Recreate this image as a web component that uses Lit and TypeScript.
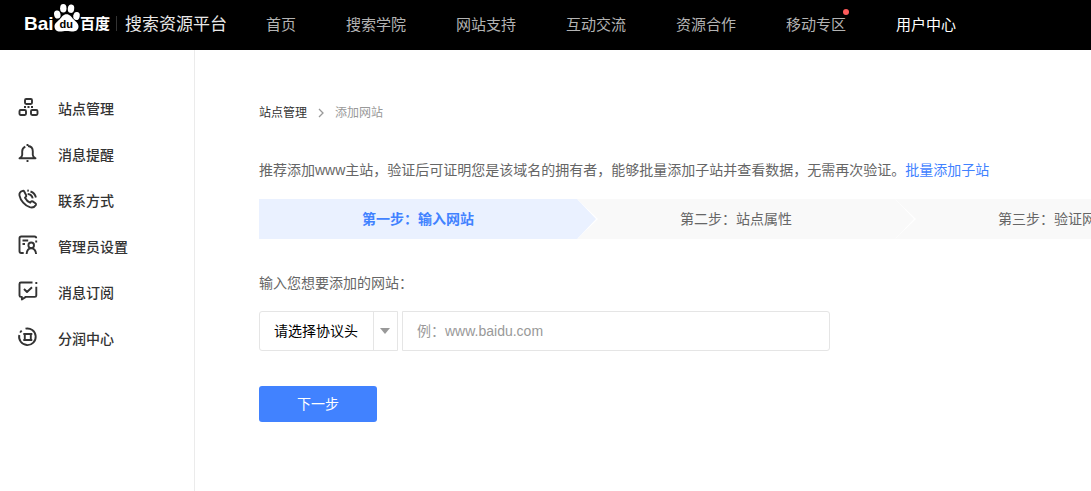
import { LitElement, html, css, svg, TemplateResult } from "lit";
import { customElement, state } from "lit/decorators.js";

interface NavItem {
  label: string;
  active?: boolean;
  dot?: boolean;
}

interface SideItem {
  label: string;
  icon: TemplateResult;
}

const NAV: NavItem[] = [
  { label: "首页" },
  { label: "搜索学院" },
  { label: "网站支持" },
  { label: "互动交流" },
  { label: "资源合作" },
  { label: "移动专区", dot: true },
  { label: "用户中心", active: true },
];

const SIDE: SideItem[] = [
  {
    label: "站点管理",
    icon: svg`
      <rect x="7" y="2" width="7" height="5" rx="1.2" />
      <rect x="1.500" y="13" width="6.500" height="5" rx="1.2" />
      <rect x="13" y="13" width="6.500" height="5" rx="1.2" />
      <path d="M6 10h2M9.500 10h2M13 10h2" />`,
  },
  {
    label: "消息提醒",
    icon: svg`
      <path d="M7.300 3.600C5 4.600 4.200 6.300 4.200 8.300v3.600c0 1.600-.8 2.400-2.700 3.400h16c-1.900-1-2.700-1.800-2.700-3.400V8.300c0-3-1.900-5-4.800-5.300M9.500 1v2M9.500 17v2" />`,
  },
  {
    label: "联系方式",
    icon: svg`
      <path d="M4.800 1.8C2.600 2.400 1 4 1.500 6.600c.9 4.800 5.500 10 10.300 11.600 2.600.8 4.800-.2 6.100-2.300.4-.8.2-1.200-.5-1.700l-2.700-1.800c-.7-.4-1.200-.3-1.700.3l-.8 1c-2.200-.9-4-2.700-5.200-5l.9-.9c.5-.5.5-1 .2-1.600L6.200 2.500c-.3-.6-.7-.9-1.400-.7z" />
      <path d="M9.300 1.500l1.500.3M12.500 2.500c3 1 4.800 3 5.400 6M9.700 5c2.700.3 4.400 1.800 5 4.400" />`,
  },
  {
    label: "管理员设置",
    icon: svg`
      <path d="M5.700 18H3.200c-1.200 0-1.700-.6-1.700-1.700V3.200C1.500 2.100 2.100 1.500 3.200 1.500h13.300c1 0 1.700.5 1.700 1.700M18.200 5.500v2M4.500 5.500h5.700M4.500 9h2.500" />
      <circle cx="13.200" cy="10.300" r="2.800" />
      <path d="M8.600 19c.3-3.600 2-5.800 4.600-5.800s4.500 2.200 4.900 5.800" />`,
  },
  {
    label: "消息订阅",
    icon: svg`
      <path d="M14.500 1.500H2.900c-1 0-1.400.5-1.400 1.500v11.500c0 .9.500 1.400 1.400 1.400h1v2.600l3.900-2.600h9c1 0 1.500-.5 1.500-1.400V5.800M18.300 1v2M6 8l3 3 5-4.800" />`,
  },
  {
    label: "分润中心",
    icon: svg`
      <path d="M7.500 1.700A8.300 8.300 0 1 1 1.300 8M2.200 5.600c.4-.7.9-1.300 1.500-1.900" />
      <path d="M6.800 7h6v6H6.800zM5.300 7h9M5.300 13h9" />`,
  },
];

const STEPS = ["第一步：输入网站", "第二步：站点属性", "第三步：验证网站"];

@customElement("site-header")
class SiteHeader extends LitElement {
  static styles = css`
    :host {
      display: block;
      background: #000;
    }
    .bar {
      display: flex;
      align-items: center;
      height: 50px;
      padding-left: 24px;
      white-space: nowrap;
    }
    .logo {
      display: flex;
      flex: none;
      width: 242px;
    }
    .nav {
      display: flex;
      gap: 50px;
    }
    .link {
      position: relative;
      color: #b3b3b3;
      font-size: 15px;
      line-height: 24px;
      text-decoration: none;
    }
    .active {
      color: #fff;
    }
    .dot {
      position: absolute;
      top: -4px;
      right: -3px;
      width: 6px;
      height: 6px;
      border-radius: 50%;
      background: #ff5b5b;
    }
    .brand {
      font-family: "Liberation Sans", sans-serif;
      font-weight: bold;
    }
    .cjk {
      font-family: "Noto Sans CJK SC", sans-serif;
    }
  `;

  render() {
    return html`
      <header class="bar">
        <a class="logo" href="#" aria-label="百度搜索资源平台">
          <svg width="210" height="50" viewBox="0 0 210 50" fill="#fff">
            <text class="brand" x="0" y="30" font-size="19">Bai</text>
            <ellipse cx="33.300" cy="14.500" rx="3.200" ry="4.100" transform="rotate(-12 33.300 14.500)" />
            <ellipse cx="39.300" cy="8.300" rx="3.200" ry="4.300" />
            <ellipse cx="47" cy="8.700" rx="3.200" ry="4.200" transform="rotate(8 47 8.700)" />
            <ellipse cx="52.500" cy="16" rx="3.200" ry="4" transform="rotate(12 52.500 16)" />
            <path d="M42.500 14.300c3.200 0 4.800 2.600 6.700 4.800 2.200 2.300 5.300 4 5.300 7.500 0 3-2.200 4.900-5.200 4.900-2.400 0-4.400-.6-6.800-.6s-4.200.6-6.600.6c-3.200 0-5.400-1.900-5.400-5 0-3.500 3.200-5 5.300-7.300 2.200-2.300 3.500-4.900 6.700-4.900z" />
            <text class="brand" x="35.500" y="28" font-size="11" fill="#000">du</text>
            <text class="cjk" x="56" y="29" font-size="15" font-weight="bold">百度</text>
            <path d="M92 16h1v15h-1z" fill="#333" />
            <text class="cjk" x="101" y="30" font-size="17" fill="#e8e8e8">搜索资源平台</text>
          </svg>
        </a>
        <nav class="nav">
          ${NAV.map(
            (n) => html`<a class="link ${n.active ? "active" : ""}" href="#"
              >${n.label}${n.dot ? html`<span class="dot"></span>` : ""}</a
            >`
          )}
        </nav>
      </header>
    `;
  }
}

@customElement("side-menu")
class SideMenu extends LitElement {
  static styles = css`
    :host {
      display: block;
      flex: none;
      box-sizing: border-box;
      width: 195px;
      padding-top: 36px;
      border-right: 1px solid #ebebeb;
    }
    .item {
      display: flex;
      align-items: center;
      gap: 20px;
      height: 46px;
      padding-left: 18px;
      color: #333;
      font-size: 14px;
      font-weight: 500;
      text-decoration: none;
    }
    .icon {
      flex: none;
      width: 20px;
      height: 24px;
      overflow: visible;
      fill: none;
      stroke: #333;
      stroke-width: 1.9;
      stroke-linecap: butt;
      stroke-linejoin: round;
    }
  `;

  render() {
    return html`
      <nav>
        ${SIDE.map(
          (s) => html`<a class="item" href="#">
            <svg class="icon" viewBox="0 0 20 24">${s.icon}</svg>
            <span>${s.label}</span>
          </a>`
        )}
      </nav>
    `;
  }
}

@customElement("step-bar")
class StepBar extends LitElement {
  static styles = css`
    :host {
      display: block;
    }
    .steps {
      display: flex;
      min-width: 954px;
      margin: 0;
      padding: 0;
      list-style: none;
    }
    .step {
      --tone: #f9f9f9;
      position: relative;
      flex: 1;
      background: var(--tone);
      color: #666;
      font-size: 14px;
      line-height: 40px;
      text-align: center;
    }
    .current {
      --tone: #eaf1ff;
      color: #4182ff;
      font-weight: bold;
    }
    .step:not(:last-child)::before,
    .step:not(:last-child)::after {
      content: "";
      position: absolute;
      z-index: 1;
      top: 0;
      left: 100%;
      width: 21px;
      height: 100%;
      background: #fff;
      clip-path: polygon(0 0, 100% 50%, 0 100%);
    }
    .step:not(:last-child)::after {
      width: 19px;
      background: var(--tone);
    }
  `;

  render() {
    return html`
      <ol class="steps">
        ${STEPS.map((s, i) => html`<li class="step ${i === 0 ? "current" : ""}">${s}</li>`)}
      </ol>
    `;
  }
}

@customElement("app-root")
class AppRoot extends LitElement {
  static styles = css`
    :host {
      display: flex;
      flex-direction: column;
      min-height: 100vh;
      overflow: hidden;
      background: #fff;
      color: #666;
      font-family: "Liberation Sans", "Noto Sans CJK SC", sans-serif;
      font-size: 14px;
      line-height: 20px;
    }
    .body {
      display: flex;
      flex: 1;
    }
    .main {
      flex: 1;
      min-width: 0;
      padding: 53px 64px;
    }
    .crumbs {
      display: flex;
      align-items: center;
      gap: 10px;
      font-size: 12px;
      color: #999;
    }
    .crumb {
      color: #333;
      text-decoration: none;
    }
    .chevron {
      width: 8px;
      height: 10px;
      fill: none;
      stroke: #999;
      stroke-width: 1.3;
    }
    .tip {
      margin: 37px 0 19px;
      white-space: nowrap;
    }
    .more {
      color: #4182ff;
      text-decoration: none;
    }
    .label {
      display: block;
      margin: 34px 0 18px;
    }
    .row {
      display: flex;
      gap: 4px;
      max-width: 571px;
    }
    .picker {
      display: grid;
      flex: none;
      grid-template-columns: 114px 25px;
      box-sizing: border-box;
      width: 139px;
      height: 40px;
    }
    .select {
      grid-area: 1 / 1 / 2 / 3;
      appearance: none;
      box-sizing: border-box;
      padding: 0 26px 0 14px;
      border: 1px solid #e5e5e5;
      border-radius: 3px 0 0 3px;
      background: #fff;
      color: #000;
      font: inherit;
    }
    .arrow {
      grid-area: 1 / 2;
      display: flex;
      align-items: center;
      padding-left: 6px;
      border-left: 1px solid #e5e5e5;
      pointer-events: none;
      z-index: 1;
    }
    .input {
      flex: 1;
      min-width: 0;
      box-sizing: border-box;
      height: 40px;
      padding: 0 14px;
      border: 1px solid #e5e5e5;
      border-radius: 0 3px 3px 0;
      color: #333;
      font: inherit;
    }
    .input::placeholder {
      color: #999;
    }
    .next {
      width: 118px;
      height: 36px;
      margin-top: 35px;
      padding: 0;
      border: 0;
      border-radius: 3px;
      background: #4182ff;
      color: #fff;
      font: inherit;
      cursor: pointer;
    }
  `;

  @state() private protocol = "";

  private onProtocol(e: Event) {
    this.protocol = (e.target as HTMLSelectElement).value;
  }

  render() {
    return html`
      <site-header></site-header>
      <div class="body">
        <side-menu></side-menu>
        <main class="main">
          <nav class="crumbs">
            <a class="crumb" href="#">站点管理</a>
            <svg class="chevron" viewBox="0 0 8 10"><path d="M2 1l4 4-4 4" /></svg>
            <span>添加网站</span>
          </nav>
          <p class="tip">推荐添加www主站，验证后可证明您是该域名的拥有者，能够批量添加子站并查看数据，无需再次验证。<a class="more" href="#">批量添加子站</a></p>
          <step-bar></step-bar>
          <form @submit=${(e: Event) => e.preventDefault()}>
            <label class="label" for="site">输入您想要添加的网站：</label>
            <div class="row">
              <div class="picker">
                <select class="select" aria-label="协议头" .value=${this.protocol} @change=${this.onProtocol}>
                  <option value="">请选择协议头</option>
                  <option value="http">http://</option>
                  <option value="https">https://</option>
                </select>
                <span class="arrow">
                  <svg width="10" height="6" viewBox="0 0 10 6"><path d="M0 0h10L5 6z" fill="#999" /></svg>
                </span>
              </div>
              <input class="input" id="site" type="text" placeholder="例：www.baidu.com" />
            </div>
            <button class="next" type="submit">下一步</button>
          </form>
        </main>
      </div>
    `;
  }
}
